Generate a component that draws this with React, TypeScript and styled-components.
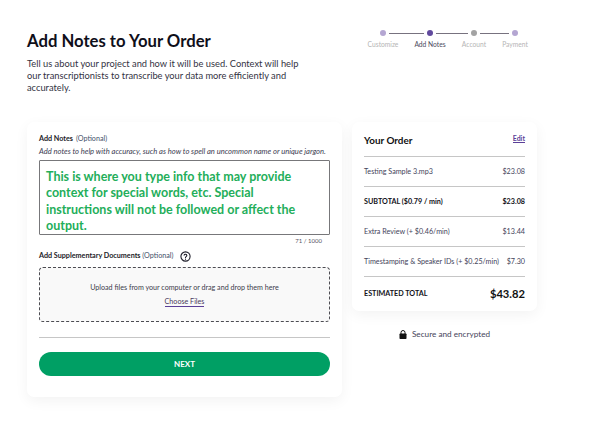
import React from "react";
import styled, { createGlobalStyle } from "styled-components";

const UI = `"Lato", "Noto Sans", sans-serif`;

const Global = createGlobalStyle`
  html, body { margin: 0; padding: 0; background: #fff; }
  body { font-family: ${UI}; color: #1c1c28; }
  * { box-sizing: border-box; }
`;

const Page = styled.div`
  width: 600px;
  height: 432px;
  overflow: hidden;
  padding: 32px 0 0 27px;
`;
const Header = styled.header`
  display: flex;
  height: 90px;
`;
const Intro = styled.div`
  width: 282px;
`;
const Title = styled.h1`
  margin: 0 0 8px;
  font: 700 16.7px/18px ${UI};
  color: #0f0f1a;
`;
const Lead = styled.p`
  margin: 0;
  width: 276px;
  font: 400 9.3px/12px ${UI};
  color: #33333f;
`;
const Stepper = styled.ol`
  list-style: none;
  margin: -2px 0 0 71px;
  padding: 0;
  display: flex;
  align-items: flex-start;
  width: 170px;
`;
const Step = styled.li`
  width: 6px;
  display: flex;
  flex-direction: column;
  align-items: center;
  flex: none;
`;
const Dot = styled.span<{ $c: string }>`
  width: 6px;
  height: 6px;
  border-radius: 50%;
  background: ${(p) => p.$c};
`;
const StepLabel = styled.span<{ $active?: boolean }>`
  margin-top: 4px;
  font: 400 6.7px/8px ${UI};
  white-space: nowrap;
  color: ${(p) => (p.$active ? "#4b4b5c" : "#b5b5b5")};
`;
const Connector = styled.span<{ $w: number }>`
  flex: none;
  width: ${(p) => p.$w}px;
  height: 1px;
  margin: 3px 3px 0;
  background: #77727f;
`;
const Columns = styled.main`
  display: flex;
  align-items: flex-start;
  gap: 10px;
`;
const Card = styled.section<{ $w: number; $h: number }>`
  width: ${(p) => p.$w}px;
  height: ${(p) => p.$h}px;
  background: #fff;
  border-radius: 7px;
  box-shadow: 0 4px 14px rgba(0, 0, 0, 0.05);
`;
const NotesCard = styled(Card)`
  padding: 12px 12px 0;
`;
const Label = styled.div`
  font: 700 7.2px/10px ${UI};
  color: #1c1c28;
  display: flex;
  align-items: center;
  gap: 3px;
`;
const Optional = styled.span`
  font-weight: 400;
  color: #44506a;
`;
const Hint = styled.div`
  margin-top: 2px;
  font: italic 400 7.6px/10px ${UI};
  white-space: nowrap;
  color: #3c3c52;
`;
const NoteBox = styled.div`
  margin-top: 4px;
  width: 291px;
  height: 75px;
  border: 1px solid #77777a;
  border-radius: 1px;
  padding: 8px 30px 0 6px;
  font: 700 12.5px/16.4px ${UI};
  color: #23ae5a;
  overflow: hidden;
`;
const Counter = styled.div`
  margin-top: 2px;
  width: 291px;
  padding-right: 8px;
  text-align: right;
  font: 400 6px/8px ${UI};
  color: #55555f;
`;
const SuppLabel = styled(Label)`
  margin-top: 5px;
  gap: 7px;
  height: 12px;
`;
const Help = styled.svg`
  width: 11px;
  height: 11px;
  flex: none;
`;
const Drop = styled.div`
  margin-top: 5px;
  width: 291px;
  height: 55px;
  border: 1px dashed #4c4c52;
  border-radius: 4px;
  background: #f9f9f9;
  display: flex;
  flex-direction: column;
  align-items: center;
  padding-top: 15px;
  font: 400 7.15px/10px ${UI};
  color: #3c3c4c;
`;
const Choose = styled.a`
  margin-top: 4px;
  line-height: 9px;
  border-bottom: 1px solid #5b3f98;
  color: #4a3a5c;
`;
const Divider = styled.hr`
  margin: 15px 0 0;
  border: 0;
  width: 291px;
  height: 1px;
  background: #c6c6c6;
`;
const NextButton = styled.button`
  display: block;
  margin-top: 14px;
  width: 291px;
  height: 24px;
  border: 0;
  border-radius: 12px;
  background: #009f64;
  color: #fff;
  font: 700 8px/24px ${UI};
  padding: 0;
`;
const Side = styled.aside`
  display: flex;
  flex-direction: column;
  align-items: center;
  width: 185px;
`;
const OrderCard = styled(Card)`
  padding: 0 12px;
`;
const OrderHead = styled.div`
  height: 34px;
  display: flex;
  justify-content: space-between;
  align-items: center;
  padding-top: 2px;
  font: 700 9.9px/12px ${UI};
  color: #111;
`;
const Edit = styled.a`
  font: 700 7px/8px ${UI};
  color: #5b3f98;
  border-bottom: 1px solid #5b3f98;
  margin-top: -3px;
`;
const Row = styled.div<{ $h?: number; $strong?: boolean }>`
  height: ${(p) => p.$h ?? 30}px;
  border-top: 1px solid #c6c6c6;
  display: flex;
  justify-content: space-between;
  align-items: center;
  white-space: nowrap;
  font: ${(p) => (p.$strong ? 700 : 400)} 7.2px/10px ${UI};
  color: ${(p) => (p.$strong ? "#111118" : "#44445a")};
`;
const Total = styled.span`
  font: 700 11.2px/14px ${UI};
  color: #111;
`;
const Secure = styled.div`
  margin-top: 18px;
  display: flex;
  align-items: center;
  gap: 5px;
  font: 400 8.2px/10px ${UI};
  color: #44445a;
`;
const Lock = styled.svg`
  width: 8px;
  height: 9px;
`;

export default function App() {
  return (
    <Page>
      <Global />
      <Header>
        <Intro>
          <Title>Add Notes to Your Order</Title>
          <Lead>
            Tell us about your project and how it will be used. Context will help our
            transcriptionists to transcribe your data more efficiently and accurately.
          </Lead>
        </Intro>
        <Stepper>
          <Step><Dot $c="#b4a6d2" /><StepLabel>Customize</StepLabel></Step>
          <Connector $w={35} />
          <Step><Dot $c="#614a9e" /><StepLabel $active>Add Notes</StepLabel></Step>
          <Connector $w={32} />
          <Step><Dot $c="#a3a3a3" /><StepLabel>Account</StepLabel></Step>
          <Connector $w={29} />
          <Step><Dot $c="#b4a6d2" /><StepLabel>Payment</StepLabel></Step>
        </Stepper>
      </Header>
      <Columns>
        <NotesCard $w={315} $h={275}>
          <Label>Add Notes <Optional>(Optional)</Optional></Label>
          <Hint>Add notes to help with accuracy, such as how to spell an uncommon name or unique jargon.</Hint>
          <NoteBox>
            This is where you type info that may provide context for special words, etc. Special
            instructions will not be followed or affect the output.
          </NoteBox>
          <Counter>71 / 1000</Counter>
          <SuppLabel>
            <span>Add Supplementary Documents <Optional>(Optional)</Optional></span>
            <Help viewBox="0 0 24 24" fill="none" stroke="#1c1c28" strokeWidth="2.4" strokeLinecap="round">
              <circle cx="12" cy="12" r="10" />
              <path d="M9 9.2a3 3 0 0 1 5.9.8c0 2-3 2.4-3 4.4" />
              <path d="M12 17.8v.1" />
            </Help>
          </SuppLabel>
          <Drop>
            <span>Upload files from your computer or drag and drop them here</span>
            <Choose>Choose Files</Choose>
          </Drop>
          <Divider />
          <NextButton>NEXT</NextButton>
        </NotesCard>
        <Side>
          <OrderCard $w={185} $h={189}>
            <OrderHead>Your Order<Edit>Edit</Edit></OrderHead>
            <Row><span>Testing Sample 3.mp3</span><span>$23.08</span></Row>
            <Row $strong><span>SUBTOTAL ($0.79 / min)</span><span>$23.08</span></Row>
            <Row><span>Extra Review (+ $0.46/min)</span><span>$13.44</span></Row>
            <Row><span>Timestamping &amp; Speaker IDs (+ $0.25/min)</span><span>$7.30</span></Row>
            <Row $strong $h={35}><span>ESTIMATED TOTAL</span><Total>$43.82</Total></Row>
          </OrderCard>
          <Secure>
            <Lock viewBox="0 0 16 18">
              <path d="M4 8V5a4 4 0 0 1 8 0v3" fill="none" stroke="#111" strokeWidth="2" />
              <rect x="1" y="7" width="14" height="11" rx="1.5" fill="#111" />
            </Lock>
            Secure and encrypted
          </Secure>
        </Side>
      </Columns>
    </Page>
  );
}
